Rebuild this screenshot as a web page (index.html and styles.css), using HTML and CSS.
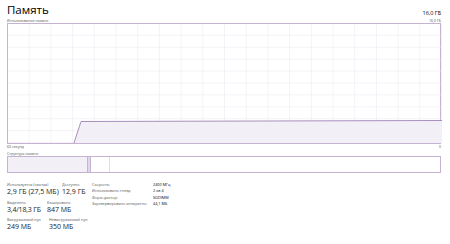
FILE: index.html
```html
<!DOCTYPE html>
<html lang="ru">
<head>
    <meta charset="UTF-8">
    <title>Память</title>
    <link rel="stylesheet" href="styles.css">
</head>
<body>
    <div class="panel">
        <div class="header">
            <h1>Память</h1>
            <span class="total">16,0 ГБ</span>
        </div>
        <div class="caption">
            <span>Использование памяти</span>
            <span>16,0 ГБ</span>
        </div>
        <div class="graph">
            <svg width="434" height="119" viewBox="0 0 434 119">
                <defs>
                    <pattern id="grid" width="21.7" height="11.9" patternUnits="userSpaceOnUse">
                        <path d="M21.7 0 V11.9 M0 11.9 H21.7" fill="none" stroke="#ebe5ef" stroke-width="1"/>
                    </pattern>
                </defs>
                <rect x="0" y="0" width="434" height="119" fill="url(#grid)"/>
                <path d="M66 119 L73 97.5 L434 96.5 L434 119 Z" fill="#f3eff6"/>
                <path d="M66 119 L73 97.5 L434 96.5" fill="none" stroke="#a98fbd" stroke-width="1"/>
            </svg>
        </div>
        <div class="caption">
            <span>60 секунд</span>
            <span>0</span>
        </div>
        <div class="caption">
            <span>Структура памяти</span>
        </div>
        <div class="composition">
            <div class="seg used"></div>
            <div class="seg modified"></div>
            <div class="seg standby"></div>
            <div class="seg free"></div>
        </div>

        <div class="stats">
            <div class="left">
                <div class="row">
                    <div class="stat w55">
                        <div class="label">Используется (сжатая)</div>
                        <div class="value">2,9 ГБ (27,5 МБ)</div>
                    </div>
                    <div class="stat">
                        <div class="label">Доступно</div>
                        <div class="value">12,9 ГБ</div>
                    </div>
                </div>
                <div class="row">
                    <div class="stat w40">
                        <div class="label">Выделено</div>
                        <div class="value">3,4/18,3 ГБ</div>
                    </div>
                    <div class="stat">
                        <div class="label">Кэшировано</div>
                        <div class="value">847 МБ</div>
                    </div>
                </div>
                <div class="row">
                    <div class="stat w42">
                        <div class="label">Выгружаемый пул</div>
                        <div class="value">249 МБ</div>
                    </div>
                    <div class="stat">
                        <div class="label">Невыгружаемый пул</div>
                        <div class="value">350 МБ</div>
                    </div>
                </div>
            </div>
            <div class="details">
                <div class="drow"><span class="dkey">Скорость:</span><span>2400 МГц</span></div>
                <div class="drow"><span class="dkey">Использовано гнезд:</span><span>2 из 4</span></div>
                <div class="drow"><span class="dkey">Форм-фактор:</span><span>SODIMM</span></div>
                <div class="drow"><span class="dkey">Зарезервировано аппаратно:</span><span>44,1 МБ</span></div>
            </div>
        </div>
    </div>
</body>
</html>
```

FILE: styles.css
```css
body, html {
    margin: 0;
    padding: 0;
    background: #fff;
    font-family: "Open Sans", "Noto Sans", sans-serif;
    color: #000;
}

.panel {
    width: 434px;
    padding: 3px 9px 0 7px;
}

.header {
    display: flex;
    justify-content: space-between;
    align-items: flex-end;
    height: 14px;
}

.header h1 {
    margin: 0;
    font-weight: 400;
    font-size: 11.5px;
    line-height: 14px;
}

.header .total {
    font-size: 5.5px;
    line-height: 8px;
}

.caption {
    display: flex;
    justify-content: space-between;
    font-size: 3.6px;
    line-height: 5px;
    color: #555;
    height: 5px;
}

.header + .caption {
    margin-top: 1px;
}

.graph {
    border: 1px solid #c5b3d1;
    height: 119px;
    margin: 0;
}

.graph svg {
    display: block;
}

.caption + .caption {
    margin-top: 2px;
}

.composition {
    display: flex;
    height: 15px;
    border: 1px solid #c5b3d1;
}

.seg.used {
    width: 79px;
    background: #f3eff6;
    border-right: 1px solid #c5b3d1;
}

.seg.modified {
    width: 2px;
    background: #e2d6ea;
    border-right: 1px solid #c5b3d1;
}

.seg.standby {
    width: 18px;
    border-right: 1px solid #e4dbe9;
}

.seg.free {
    flex: 1;
}

.stats {
    display: flex;
    margin-top: 9px;
}

.left {
    width: 85px;
}

.row {
    display: flex;
    height: 17.5px;
}

.stat {
    min-width: 0;
}

.stat.w55 { flex: 0 0 55px; }
.stat.w40 { flex: 0 0 40px; }
.stat.w42 { flex: 0 0 42px; }

.label {
    font-size: 3.8px;
    line-height: 5px;
    color: #555;
    white-space: nowrap;
}

.value {
    font-size: 7px;
    line-height: 10px;
    white-space: nowrap;
    color: #222;
}

.w40 .value {
    letter-spacing: -0.2px;
}

.details {
    font-size: 3.8px;
    line-height: 6.4px;
}

.drow {
    display: flex;
}

.dkey {
    width: 61px;
    color: #555;
}
```
